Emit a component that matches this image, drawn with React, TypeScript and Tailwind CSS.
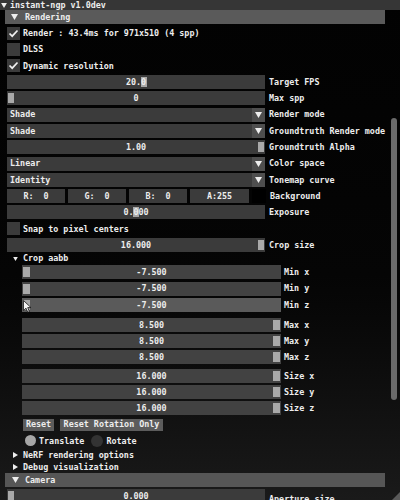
import React from "react";

const Down = ({ w = 7 }: { w?: number }) => (
  <svg width={w} height={w - 1} viewBox="0 0 7 6" className="shrink-0">
    <path d="M0 0H7L3.5 6Z" fill="#eeeeee" />
  </svg>
);
const Right = () => (
  <svg width="5" height="6" viewBox="0 0 5 6" className="shrink-0">
    <path d="M0 0L5 3L0 6Z" fill="#eeeeee" />
  </svg>
);

function Check({ on, label }: { on: boolean; label: string }) {
  return (
    <div className="h-[16.3px] flex items-center pl-[7px] gap-[3px]">
      <div className="w-[13px] h-[13px] bg-[#3b3b3b] flex items-center justify-center">
        {on && (
          <svg width="11" height="11" viewBox="0 0 11 11">
            <path d="M1.5 5.5L4.2 8.2L9.5 2.5" stroke="#f0f0f0" strokeWidth="1.7" fill="none" />
          </svg>
        )}
      </div>
      <span>{label}</span>
    </div>
  );
}

function Slider({
  value,
  label,
  grab,
  sub = false,
  bg = "bg-[#3b3b3b]",
}: {
  value: string;
  label: string;
  grab: string;
  sub?: boolean;
  bg?: string;
}) {
  return (
    <div className={sub ? "h-[16.3px] flex items-center pl-[22px] gap-[3px]" : "h-[16.3px] flex items-center pl-[7px] gap-[4px]"}>
      <div className={(sub ? "w-[259px] " : "w-[258px] ") + "h-[14px] relative flex items-center justify-center " + bg}>
        <div className={"absolute top-[2px] h-[10px] w-[6px] bg-[#a9a9a9] " + grab} />
        <span className="relative">{value}</span>
      </div>
      <span>{label}</span>
    </div>
  );
}

function Combo({ value, label }: { value: string; label: string }) {
  return (
    <div className="h-[16.3px] flex items-center pl-[7px] gap-[4px]">
      <div className="w-[258px] h-[14px] bg-[#3b3b3b] flex items-center">
        <span className="pl-[3px] flex-1">{value}</span>
        <div className="w-[13px] h-[14px] bg-[#4e4e4e] flex items-center justify-center">
          <Down />
        </div>
      </div>
      <span>{label}</span>
    </div>
  );
}

export default function App() {
  return (
    <div className="w-[400px] h-[500px] overflow-hidden relative bg-linear-to-b from-[#020202] via-[#050505] via-55% to-[#1a1a1a] text-[#ededed] text-[8.4px] leading-none font-bold font-['DejaVu_Sans_Mono','Liberation_Mono',monospace]">
      <div className="h-[10px] bg-[#363636] flex items-center pl-[1px] gap-[3px]">
        <Down w={6} />
        <span>instant-ngp v1.0dev</span>
      </div>
      <div className="flex">
        <div className="w-[389px] flex flex-col">
          <div className="ml-[5px] w-[380px] h-[14px] bg-[#5a5a5a] flex items-center pl-[6px] gap-[7px]">
            <Down />
            <span>Rendering</span>
          </div>
          <div className="h-[1px]" />
          <Check on label="Render : 43.4ms for 971x510 (4 spp)" />
          <Check on={false} label="DLSS" />
          <Check on label="Dynamic resolution" />
          <Slider value="20.0" label="Target FPS" grab="left-[134px]" />
          <Slider value="0" label="Max spp" grab="left-[1px]" />
          <Combo value="Shade" label="Render mode" />
          <Combo value="Shade" label="Groundtruth Render mode" />
          <Slider value="1.00" label="Groundtruth Alpha" grab="right-[1px]" />
          <Combo value="Linear" label="Color space" />
          <Combo value="Identity" label="Tonemap curve" />
          <div className="h-[16.3px] flex items-center pl-[7px] gap-[3px]">
            <div className="w-[58px] h-[14px] bg-[#3b3b3b] flex items-center justify-center whitespace-pre">R:  0</div>
            <div className="w-[58px] h-[14px] bg-[#3b3b3b] flex items-center justify-center whitespace-pre">G:  0</div>
            <div className="w-[58px] h-[14px] bg-[#3b3b3b] flex items-center justify-center whitespace-pre">B:  0</div>
            <div className="w-[59px] h-[14px] bg-[#3b3b3b] flex items-center justify-center whitespace-pre">A:255</div>
            <div className="w-[14px] h-[14px] bg-[#000000]" />
            <span className="ml-[1px]">Background</span>
          </div>
          <Slider value="0.000" label="Exposure" grab="left-[126px]" />
          <Check on={false} label="Snap to pixel centers" />
          <Slider value="16.000" label="Crop size" grab="right-[1px]" />
          <div className="h-[11px] flex items-center pl-[13px] gap-[5px]">
            <Down w={5} />
            <span>Crop aabb</span>
          </div>
          <Slider sub value="-7.500" label="Min x" grab="left-[1px] w-[7px]" bg="bg-[#424242]" />
          <Slider sub value="-7.500" label="Min y" grab="left-[1px] w-[7px]" bg="bg-[#424242]" />
          <Slider sub value="-7.500" label="Min z" grab="left-[1px] w-[7px]" bg="bg-[#5a5a5a]" />
          <div className="h-[3.7px]" />
          <Slider sub value="8.500" label="Max x" grab="right-[1px] w-[7px]" bg="bg-[#424242]" />
          <Slider sub value="8.500" label="Max y" grab="right-[1px] w-[7px]" bg="bg-[#424242]" />
          <Slider sub value="8.500" label="Max z" grab="right-[1px] w-[7px]" bg="bg-[#424242]" />
          <div className="h-[2px]" />
          <Slider sub value="16.000" label="Size x" grab="right-[1px] w-[7px]" bg="bg-[#424242]" />
          <Slider sub value="16.000" label="Size y" grab="right-[1px] w-[7px]" bg="bg-[#424242]" />
          <Slider sub value="16.000" label="Size z" grab="right-[1px] w-[7px]" bg="bg-[#424242]" />
          <div className="h-[16.3px] flex items-center pl-[23px] gap-[6px]">
            <div className="w-[31px] h-[12px] bg-[#5c5c5c] flex items-center justify-center">Reset</div>
            <div className="w-[103px] h-[12px] bg-[#5c5c5c] flex items-center justify-center">Reset Rotation Only</div>
          </div>
          <div className="h-[16.3px] flex items-center pl-[25px]">
            <div className="w-[11px] h-[11px] rounded-full bg-[#a6a6a6]" />
            <span className="ml-[3px]">Translate</span>
            <div className="ml-[7px] w-[12px] h-[12px] rounded-full bg-[#333333]" />
            <span className="ml-[3px]">Rotate</span>
          </div>
          <div className="h-[12px] flex items-center pl-[13px] gap-[5px]">
            <Right />
            <span>NeRF rendering options</span>
          </div>
          <div className="h-[12px] flex items-center pl-[13px] gap-[5px]">
            <Right />
            <span>Debug visualization</span>
          </div>
          <div className="ml-[5px] w-[380px] h-[14px] bg-[#565656] flex items-center pl-[7px] gap-[6px]">
            <Down />
            <span>Camera</span>
          </div>
          <div className="h-[2px]" />
          <div className="flex items-start pl-[7px] gap-[4px]">
            <div className="w-[258px] h-[14px] relative flex items-center justify-center bg-[#3b3b3b]">
              <div className="absolute top-[2px] h-[10px] w-[6px] left-[1px] bg-[#a9a9a9]" />
              <span className="relative">0.000</span>
            </div>
            <span className="mt-[6px]">Aperture size</span>
          </div>
        </div>
        <div className="w-[11px] pt-[108px] pl-[2px]">
          <div className="w-[6px] h-[282px] rounded-full bg-[#6a6a6a]" />
        </div>
      </div>
      <svg className="absolute left-[23px] top-[300px]" width="9" height="13" viewBox="0 0 9 13">
        <path d="M0.5 0.5V10.5L3 8.2L4.8 12.3L6.4 11.6L4.7 7.6H8Z" fill="#f4f4f4" stroke="#111" strokeWidth="0.8" />
      </svg>
      <svg className="absolute right-0 bottom-0" width="8" height="8" viewBox="0 0 8 8">
        <path d="M8 0V8H0Z" fill="#5a5a5a" />
      </svg>
    </div>
  );
}
